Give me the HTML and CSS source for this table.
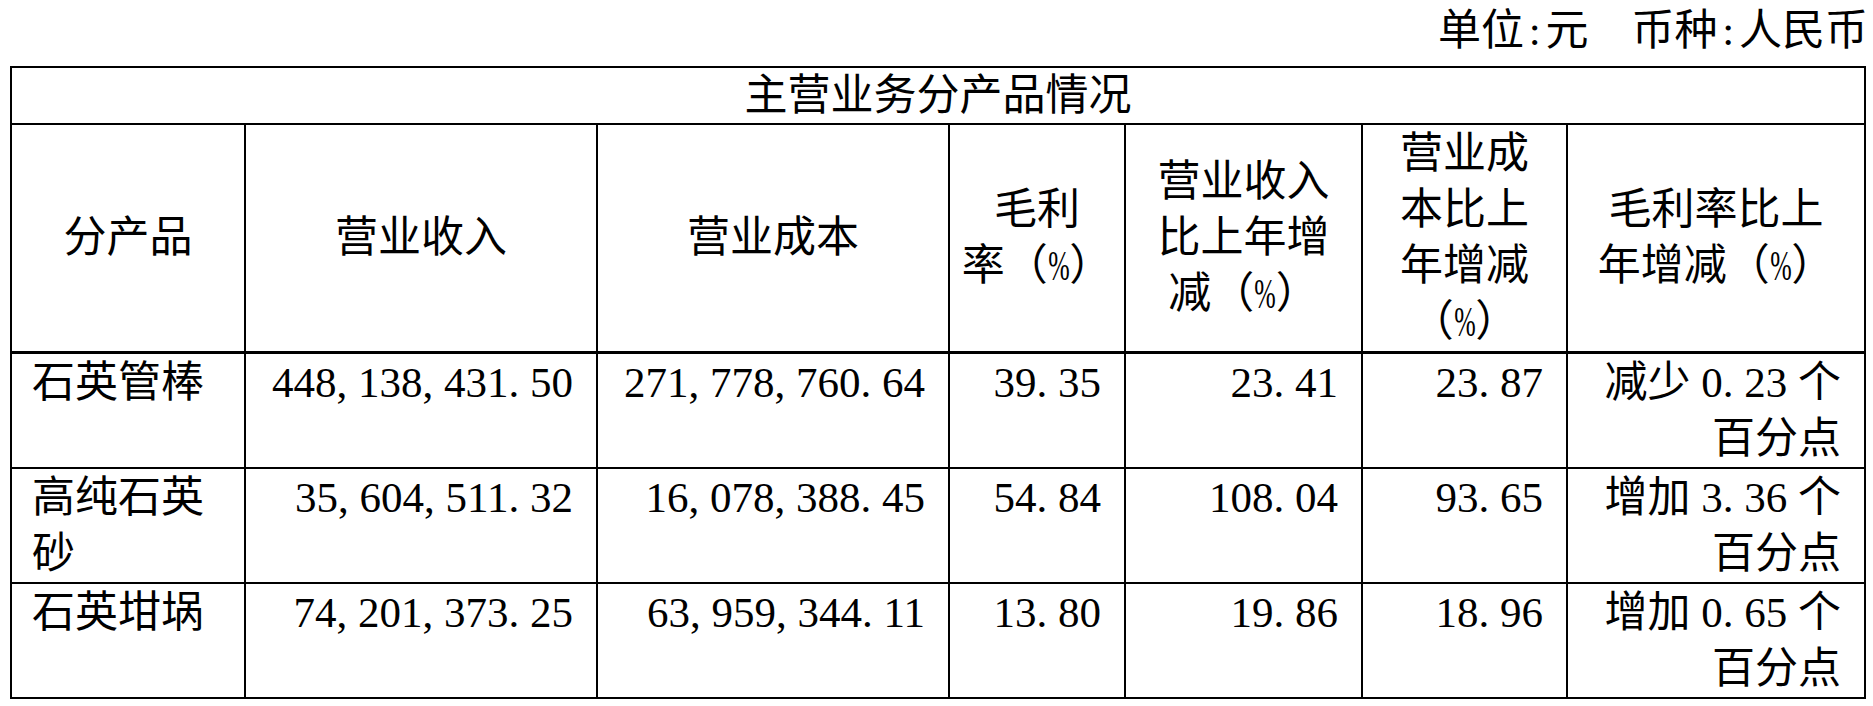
FILE: index.html
```html
<!DOCTYPE html>
<html lang="zh-CN">
<head>
<meta charset="utf-8">
<title>主营业务分产品情况</title>
<link rel="stylesheet" href="styles.css">
</head>
<body>
<div class="page">
  <div class="unit">单位<span class="p c">:</span>元　币种<span class="p c">:</span>人民币</div>
  <table class="report">
    <colgroup>
      <col class="c1"><col class="c2"><col class="c3"><col class="c4"><col class="c5"><col class="c6"><col class="c7">
    </colgroup>
    <tr>
      <th colspan="7" class="title">主营业务分产品情况</th>
    </tr>
    <tr class="head">
      <th>分产品</th>
      <th>营业收入</th>
      <th>营业成本</th>
      <th>毛利<br>率（<span class="pct">%</span>）</th>
      <th>营业收入<br>比上年增<br>减（<span class="pct">%</span>）</th>
      <th>营业成<br>本比上<br>年增减<br>（<span class="pct">%</span>）</th>
      <th>毛利率比上<br>年增减（<span class="pct">%</span>）</th>
    </tr>
    <tr>
      <td class="name">石英管棒</td>
      <td class="num">448<span class="p">,</span>138<span class="p">,</span>431<span class="p">.</span>50</td>
      <td class="num">271<span class="p">,</span>778<span class="p">,</span>760<span class="p">.</span>64</td>
      <td class="num">39<span class="p">.</span>35</td>
      <td class="num">23<span class="p">.</span>41</td>
      <td class="num">23<span class="p">.</span>87</td>
      <td class="num">减少 0<span class="p">.</span>23 个<br>百分点</td>
    </tr>
    <tr>
      <td class="name">高纯石英砂</td>
      <td class="num">35<span class="p">,</span>604<span class="p">,</span>511<span class="p">.</span>32</td>
      <td class="num">16<span class="p">,</span>078<span class="p">,</span>388<span class="p">.</span>45</td>
      <td class="num">54<span class="p">.</span>84</td>
      <td class="num">108<span class="p">.</span>04</td>
      <td class="num">93<span class="p">.</span>65</td>
      <td class="num">增加 3<span class="p">.</span>36 个<br>百分点</td>
    </tr>
    <tr>
      <td class="name">石英坩埚</td>
      <td class="num">74<span class="p">,</span>201<span class="p">,</span>373<span class="p">.</span>25</td>
      <td class="num">63<span class="p">,</span>959<span class="p">,</span>344<span class="p">.</span>11</td>
      <td class="num">13<span class="p">.</span>80</td>
      <td class="num">19<span class="p">.</span>86</td>
      <td class="num">18<span class="p">.</span>96</td>
      <td class="num">增加 0<span class="p">.</span>65 个<br>百分点</td>
    </tr>
  </table>
</div>
</body>
</html>
```

FILE: styles.css
```css
* {
  box-sizing: border-box;
}

html, body {
  margin: 0;
  padding: 0;
  background: #ffffff;
}

body {
  color: #000000;
  font-family: "Liberation Serif", "Noto Sans CJK SC", serif;
  font-size: 43px;
  font-weight: 400;
}

.page {
  padding-left: 10px;
  width: 1864px;
}

.unit {
  height: 66px;
  line-height: 62px;
  text-align: right;
  white-space: nowrap;
  margin-right: -4px;
}

.report {
  border-collapse: collapse;
  table-layout: fixed;
  width: 1854px;
  border: 2px solid #000;
}

.c1 { width: 234px; }
.c2 { width: 352px; }
.c3 { width: 352px; }
.c4 { width: 176px; }
.c5 { width: 237px; }
.c6 { width: 205px; }
.c7 { width: 298px; }

.report th,
.report td {
  border: 2px solid #000;
  line-height: 56px;
  font-weight: 400;
  padding: 1px 23px 0 20px;
}

.report .title {
  padding: 0;
  line-height: 55px;
  text-align: center;
  vertical-align: middle;
}

.head th {
  text-align: center;
  vertical-align: middle;
  padding: 1px 4px 1px 4px;
  white-space: nowrap;
  border-bottom-width: 3px;
}

.report td {
  text-align: right;
  vertical-align: top;
  white-space: nowrap;
}

.report td.name {
  text-align: left;
  white-space: normal;
}

.p {
  display: inline-block;
  width: 0.5em;
  text-align: left;
}

.p.c {
  text-align: center;
}

.pct {
  display: inline-block;
  width: 0.833em;
  margin: 0 -0.1665em;
  text-align: center;
  transform: scaleX(0.6);
}
```
